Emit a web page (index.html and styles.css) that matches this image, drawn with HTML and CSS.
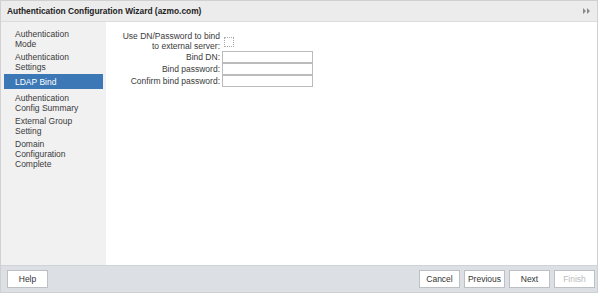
FILE: index.html
```html
<!DOCTYPE html>
<html lang="en">

<head>
   <meta charset="UTF-8">
   <link rel="stylesheet" href="styles.css">
</head>

<body>
   <div class="wizard">
      <div class="title-bar">
         <span class="title">Authentication Configuration Wizard (azmo.com)</span>
         <svg class="collapse" width="8" height="6" viewBox="0 0 8 6">
            <path d="M0 0 L3 3 L0 6 Z M4 0 L7 3 L4 6 Z" fill="#8a8a8a" />
         </svg>
      </div>
      <div class="main">
         <ul class="steps">
            <li>Authentication<br>Mode</li>
            <li>Authentication<br>Settings</li>
            <li class="active">LDAP Bind</li>
            <li>Authentication<br>Config Summary</li>
            <li>External Group<br>Setting</li>
            <li>Domain<br>Configuration<br>Complete</li>
         </ul>
         <div class="content">
            <div class="form">
               <label class="lbl">Use DN/Password to bind<br>to external server:</label>
               <span class="check"></span>
               <label class="lbl">Bind DN:</label>
               <input class="field" type="text">
               <label class="lbl">Bind password:</label>
               <input class="field" type="password">
               <label class="lbl">Confirm bind password:</label>
               <input class="field" type="password">
            </div>
         </div>
      </div>
      <div class="footer">
         <button class="btn">Help</button>
         <div class="nav">
            <button class="btn">Cancel</button>
            <button class="btn">Previous</button>
            <button class="btn">Next</button>
            <button class="btn disabled">Finish</button>
         </div>
      </div>
   </div>
</body>

</html>
```
FILE: styles.css
```css
* {
   box-sizing: border-box;
}

body {
   margin: 0;
   font-family: "Liberation Sans", Arial, sans-serif;
   font-size: 8.5px;
   color: #333;
}

.wizard {
   width: 598px;
   height: 293px;
   border: 1px solid #d0d0d0;
   display: flex;
   flex-direction: column;
   background: #fff;
}

.title-bar {
   height: 21px;
   background: #ececec;
   border-bottom: 1px solid #dcdcdc;
   display: flex;
   align-items: center;
   justify-content: space-between;
   padding: 0 6px 0 6px;
}

.title {
   font-weight: bold;
   font-size: 8.4px;
   color: #222;
}

.main {
   flex: 1;
   display: flex;
}

.steps {
   width: 105px;
   margin: 0;
   padding: 6px 3px 0 3px;
   list-style: none;
   background: #f1f1f1;
}

.steps li {
   padding: 1px 0 0 11px;
   margin-bottom: 2px;
   line-height: 10px;
   color: #3a3a3a;
}

.steps li.active {
   background: #3b78b5;
   color: #fff;
   padding: 3px 0 2px 11px;
   margin-bottom: 3px;
}

.content {
   flex: 1;
   padding: 9px 0 0 1px;
}

.form {
   display: grid;
   grid-template-columns: 113px 92px;
   column-gap: 2px;
   align-items: center;
}

.lbl {
   text-align: right;
   line-height: 10px;
   color: #3a3a3a;
}

.check {
   width: 10px;
   height: 10px;
   border: 1px dotted #aaa;
   margin-left: 2px;
   margin-top: 2px;
}

.field {
   height: 12px;
   width: 91px;
   border: 1px solid #bbb;
   padding: 0;
   margin: 0;
}

.footer {
   height: 27px;
   background: #dcdfe4;
   border-top: 1px solid #cfd2d6;
   display: flex;
   align-items: center;
   justify-content: space-between;
   padding: 0 2px 0 6px;
}

.nav {
   display: flex;
   gap: 4px;
}

.btn {
   height: 18px;
   width: 41px;
   background: #fff;
   border: 1px solid #bcc0c4;
   font-family: "Liberation Sans", Arial, sans-serif;
   font-size: 8.5px;
   color: #333;
   padding: 0;
}

.btn.disabled {
   color: #bbb;
}
```
